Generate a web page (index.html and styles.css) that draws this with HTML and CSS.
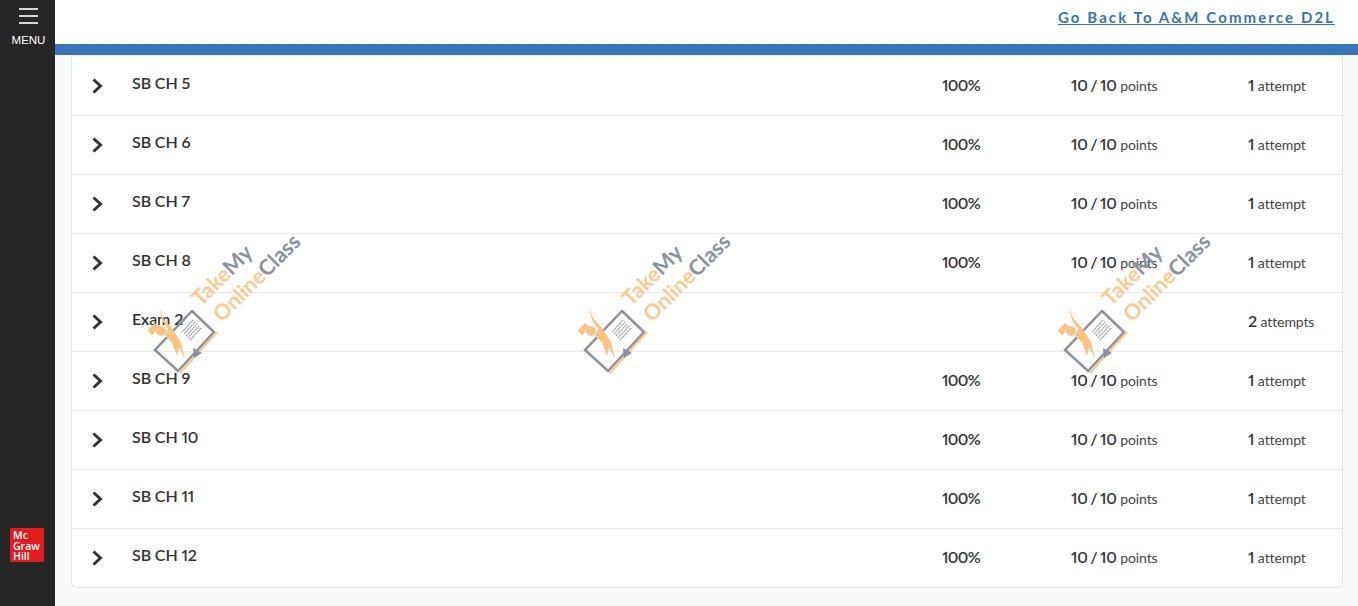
FILE: index.html
```html
<!DOCTYPE html>
<html lang="en">
  <head>
    <meta charset="utf-8" />
    <title>Results</title>
    <link rel="stylesheet" href="styles.css">
  </head>
  <body>
    <!-- Sidebar -->
    <aside class="sidebar">
      <button class="menu-btn">
        <span class="menu-bar"></span>
        <span class="menu-bar"></span>
        <span class="menu-bar"></span>
        <span class="menu-label">MENU</span>
      </button>
      <div class="logo">
        <span>Mc</span>
        <span>Graw</span>
        <span>Hill</span>
      </div>
    </aside>

    <main class="main">
      <header class="topbar">
        <a class="back-link" href="#">Go Back To A&amp;M Commerce D2L</a>
      </header>
      <div class="blue-strip"></div>

      <div class="content">
        <section class="card">
          <div class="row">
            <svg class="chevron" viewBox="0 0 12 16"><path d="M2.5 1.5 L9.5 8 L2.5 14.5" /></svg>
            <span class="row-title">SB CH 5</span>
            <span class="row-score">100%</span>
            <span class="row-points"><b>10 / 10</b> points</span>
            <span class="row-attempts"><b>1</b> attempt</span>
          </div>
          <div class="row">
            <svg class="chevron" viewBox="0 0 12 16"><path d="M2.5 1.5 L9.5 8 L2.5 14.5" /></svg>
            <span class="row-title">SB CH 6</span>
            <span class="row-score">100%</span>
            <span class="row-points"><b>10 / 10</b> points</span>
            <span class="row-attempts"><b>1</b> attempt</span>
          </div>
          <div class="row">
            <svg class="chevron" viewBox="0 0 12 16"><path d="M2.5 1.5 L9.5 8 L2.5 14.5" /></svg>
            <span class="row-title">SB CH 7</span>
            <span class="row-score">100%</span>
            <span class="row-points"><b>10 / 10</b> points</span>
            <span class="row-attempts"><b>1</b> attempt</span>
          </div>
          <div class="row">
            <svg class="chevron" viewBox="0 0 12 16"><path d="M2.5 1.5 L9.5 8 L2.5 14.5" /></svg>
            <span class="row-title">SB CH 8</span>
            <span class="row-score">100%</span>
            <span class="row-points"><b>10 / 10</b> points</span>
            <span class="row-attempts"><b>1</b> attempt</span>
          </div>
          <div class="row">
            <svg class="chevron" viewBox="0 0 12 16"><path d="M2.5 1.5 L9.5 8 L2.5 14.5" /></svg>
            <span class="row-title">Exam 2</span>
            <span class="row-score"></span>
            <span class="row-points"></span>
            <span class="row-attempts"><b>2</b> attempts</span>
          </div>
          <div class="row">
            <svg class="chevron" viewBox="0 0 12 16"><path d="M2.5 1.5 L9.5 8 L2.5 14.5" /></svg>
            <span class="row-title">SB CH 9</span>
            <span class="row-score">100%</span>
            <span class="row-points"><b>10 / 10</b> points</span>
            <span class="row-attempts"><b>1</b> attempt</span>
          </div>
          <div class="row">
            <svg class="chevron" viewBox="0 0 12 16"><path d="M2.5 1.5 L9.5 8 L2.5 14.5" /></svg>
            <span class="row-title">SB CH 10</span>
            <span class="row-score">100%</span>
            <span class="row-points"><b>10 / 10</b> points</span>
            <span class="row-attempts"><b>1</b> attempt</span>
          </div>
          <div class="row">
            <svg class="chevron" viewBox="0 0 12 16"><path d="M2.5 1.5 L9.5 8 L2.5 14.5" /></svg>
            <span class="row-title">SB CH 11</span>
            <span class="row-score">100%</span>
            <span class="row-points"><b>10 / 10</b> points</span>
            <span class="row-attempts"><b>1</b> attempt</span>
          </div>
          <div class="row">
            <svg class="chevron" viewBox="0 0 12 16"><path d="M2.5 1.5 L9.5 8 L2.5 14.5" /></svg>
            <span class="row-title">SB CH 12</span>
            <span class="row-score">100%</span>
            <span class="row-points"><b>10 / 10</b> points</span>
            <span class="row-attempts"><b>1</b> attempt</span>
          </div>
        </section>
      </div>
    </main>

    <!-- Watermarks -->
    <svg class="mark-defs" width="0" height="0">
      <symbol id="wm" viewBox="0 0 160 150">
        <!-- tablet -->
        <path class="wm-tablet" d="M44 79 L66 100 L30 139 L7 118 Z" />
        <path class="wm-line" d="M32 141 L69 100" />
        <path class="wm-tri" d="M45 116 L54 121 L46 126 Z" />
        <path class="wm-doc" d="M45 88 L34 100 M47 90 L36 102 M49 92 L38 104 M51 94 L40 106 M53 96 L42 108" />
        <!-- figure -->
        <circle class="wm-person" cx="13" cy="99" r="5" />
        <path class="wm-person" d="M0 98 L7 91 L11 94 L4 104 Z" />
        <path class="wm-person" d="M11 75 L15 86 L24 96 L33 110 L37 127 L31 115 L29 124 L24 110 L17 104 L20 97 L14 88 Z" />
        <text class="wm-text" transform="translate(53 75) rotate(-45)"><tspan class="wm-orange">Take</tspan><tspan class="wm-grey">My</tspan></text>
        <text class="wm-text" transform="translate(74 91) rotate(-45)"><tspan class="wm-orange">Online</tspan><tspan class="wm-grey">Class</tspan></text>
      </symbol>
    </svg>
    <svg class="watermark wm-a"><use href="#wm" /></svg>
    <svg class="watermark wm-b"><use href="#wm" /></svg>
    <svg class="watermark wm-c"><use href="#wm" /></svg>
  </body>
</html>
```

FILE: styles.css
```css
body {
  margin: 0;
  height: 606px;
  display: flex;
  overflow: hidden;
  background: #f8f9fb;
  font-family: "Lato", "Liberation Sans", sans-serif;
  font-variant-numeric: proportional-nums;
  color: #333;
}

.sidebar {
  width: 55px;
  flex: none;
  background: #262626;
  display: flex;
  flex-direction: column;
  justify-content: space-between;
  align-items: center;
  padding: 8px 0 44px;
  box-sizing: border-box;
}

.menu-btn {
  display: flex;
  flex-direction: column;
  align-items: center;
  gap: 5px;
  padding: 0 0 0 2px;
  background: none;
  border: none;
  color: #fff;
}

.menu-bar {
  width: 19px;
  height: 2px;
  background: #d8d8d8;
}

.menu-label {
  margin-top: 5px;
  font-family: "Liberation Sans", sans-serif;
  font-size: 11.5px;
  line-height: 13px;
}

.logo {
  align-self: flex-start;
  margin-left: 10px;
  width: 34px;
  height: 34px;
  box-sizing: border-box;
  padding: 2px 0 0 3px;
  background: #e01b22;
  color: #fff;
  display: flex;
  flex-direction: column;
  font-family: "Open Sans", sans-serif;
  font-size: 10.5px;
  font-weight: 600;
  line-height: 10.5px;
}

.main {
  flex: 1;
  min-width: 0;
  display: flex;
  flex-direction: column;
}

.topbar {
  height: 44px;
  flex: none;
  background: #fff;
  display: flex;
  justify-content: flex-end;
  padding: 8px 23px 0 0;
  box-sizing: border-box;
}

.back-link {
  color: #3674b5;
  font-size: 15px;
  font-weight: 700;
  line-height: 18px;
  letter-spacing: 2.1px;
  text-decoration: underline;
}

.blue-strip {
  height: 11px;
  flex: none;
  background: #3a75b8;
}

.content {
  padding: 0 15px 0 16px;
}

.card {
  background: #fff;
  border: 1px solid #e4e6ea;
  border-top: 1px solid #e9f1f8;
  border-radius: 0 0 6px 6px;
  padding-top: 1px;
}

.row {
  height: 54px;
  padding-bottom: 4px;
  border-bottom: 1px solid #e8eaed;
  display: grid;
  grid-template-columns: 60px 810px 129px 177px 1fr;
  align-items: center;
  font-size: 14px;
  letter-spacing: -0.1px;
  color: #444;
}

.row:last-child {
  border-bottom: none;
}

.chevron {
  width: 12px;
  height: 16px;
  margin-left: 19px;
  margin-top: 4px;
  fill: none;
  stroke: #333;
  stroke-width: 3;
}

.row-title {
  font-size: 16px;
  font-weight: 600;
  color: #333;
  margin-top: -4px;
}

.row-score {
  font-size: 16px;
  font-weight: 600;
  letter-spacing: -0.6px;
  color: #333;
}

.row-points b,
.row-attempts b {
  font-size: 16px;
  font-weight: 600;
  color: #333;
  word-spacing: -1.5px;
}

/* Filigrane */
.mark-defs {
  position: absolute;
}

.watermark {
  position: absolute;
  top: 232px;
  width: 160px;
  height: 150px;
}

.wm-a { left: 148px; }
.wm-b { left: 578px; }
.wm-c { left: 1058px; }

.wm-tablet {
  fill: none;
  stroke: #8a92a2;
  stroke-width: 2.5;
}

.wm-line {
  fill: none;
  stroke: #f8c98c;
  stroke-width: 2;
}

.wm-tri {
  fill: #8a92a2;
}

.wm-doc {
  fill: none;
  stroke: #969dab;
  stroke-width: 1.4;
  stroke-dasharray: 1.4 0.7;
}

.wm-person {
  fill: #f8c483;
}

.wm-text {
  font-family: "Lato", sans-serif;
  font-size: 21.5px;
  font-weight: 700;
}

.wm-orange {
  fill: #f9cb90;
}

.wm-grey {
  fill: #8a92a2;
}
```
